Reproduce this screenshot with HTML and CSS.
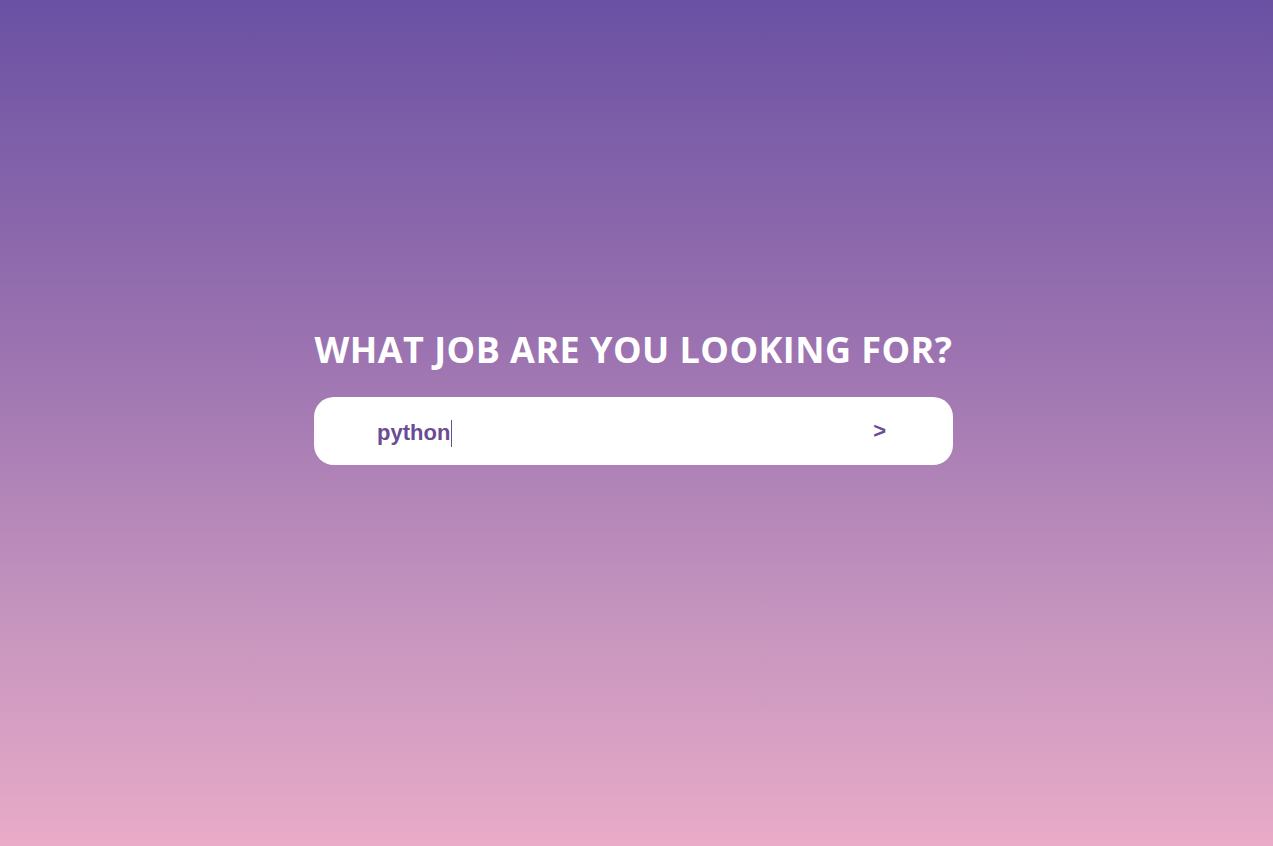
FILE: index.html
```html
<!DOCTYPE html>
<html lang="en">
<head>
<meta charset="utf-8">
<title>Job Search</title>
<link rel="stylesheet" href="styles.css">
</head>
<body>
<main class="page">
  <section class="search">
    <h1 class="title">WHAT JOB ARE YOU LOOKING FOR?</h1>
    <form class="search-box">
      <span class="query">python<span class="caret"></span></span>
      <button class="go" type="button">&gt;</button>
    </form>
  </section>
</main>
</body>
</html>
```
FILE: styles.css
```css
html, body {
  margin: 0;
  padding: 0;
  height: 100%;
}
body {
  background: linear-gradient(to bottom, #6a51a3 0%, #9a72b0 40%, #c896bf 75%, #e9abc8 100%);
  font-family: "Open Sans", "Noto Sans", sans-serif;
}
.page {
  height: 846px;
  display: flex;
  justify-content: center;
  padding-right: 6px;
}
.search {
  width: 639px;
  padding-top: 326px;
  display: flex;
  flex-direction: column;
  align-items: stretch;
}
.title {
  margin: 0;
  color: #ffffff;
  font-size: 36px;
  font-weight: 700;
  letter-spacing: 0.45px;
  text-align: center;
  line-height: 48px;
  white-space: nowrap;
}
.search-box {
  margin-top: 23px;
  height: 68px;
  background: #ffffff;
  border-radius: 20px;
  display: flex;
  align-items: center;
  justify-content: space-between;
  padding: 4px 67px 0 63px;
  box-sizing: border-box;
}
.query {
  font-family: "Liberation Sans", Arial, sans-serif;
  font-weight: 700;
  font-size: 22px;
  color: #6a4c93;
  display: flex;
  align-items: center;
}
.caret {
  display: inline-block;
  width: 1px;
  height: 27px;
  background: #6a4c93;
  margin-left: 1px;
}
.go {
  border: none;
  background: none;
  padding: 0 0 4px;
  font-family: "Liberation Sans", Arial, sans-serif;
  font-weight: 700;
  font-size: 22px;
  color: #6a4c93;
  cursor: pointer;
}
```
